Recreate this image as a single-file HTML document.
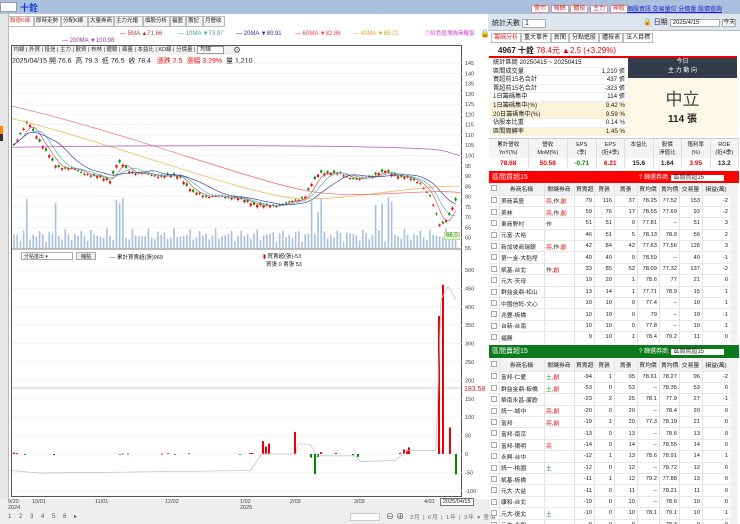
<!DOCTYPE html><html><head><meta charset="utf-8"><style>
*{box-sizing:border-box;margin:0;padding:0}
body{width:740px;height:524px;overflow:hidden;background:#fff;font-family:"Liberation Sans","Noto Sans CJK TC",sans-serif;font-size:7px;color:#222;position:relative}
.a{position:absolute}
.tab{position:absolute;top:16px;height:11px;border:1px solid #bbb;background:#f4f4f4;font-size:5.5px;line-height:9px;padding:0 1px;overflow:hidden;white-space:nowrap}
table{border-collapse:collapse;font-size:5.8px;table-layout:fixed}
td{border-right:1px solid #e3e3e3;border-bottom:1px solid #e8e8e8;height:11.4px;padding:0 1.5px;white-space:nowrap;overflow:hidden}
td.n{text-align:right}
.pk td{background:#fde6e8}.gr td{background:#e9f3e6}
.cb{display:inline-block;width:6px;height:6px;border:1px solid #aaa;background:#fff;vertical-align:middle;font-size:5px;line-height:5px}
.r{color:#e00}.g{color:#080}
.hd td{background:#f2f2f2;text-align:center;height:12px}
</style></head><body>
<div class="a" style="left:0;top:0;width:740px;height:14px;background:#a9c0de"></div>
<div class="a" style="left:0;top:2px;width:17px;height:10px;background:#fff;border:1px solid #999"></div>
<div class="a" style="left:20px;top:1px;font-size:9px;color:#1a3ccc;font-weight:bold">十銓</div>
<div class="a" style="left:0;top:14px;width:9px;height:510px;background:#e6e6e6;border-right:1px solid #bbb"></div>
<div class="a" style="left:0;top:126px;width:3px;height:8px;background:#f80"></div>
<div class="a" style="left:0;top:134px;width:3px;height:7px;background:#333"></div>
<div class="tab" style="left:8px;width:26px;color:#d33;background:#fff">聯德K線</div>
<div class="tab" style="left:34px;width:27px">即時走勢</div>
<div class="tab" style="left:61px;width:27px">分配K線</div>
<div class="tab" style="left:88px;width:26px">大量券商</div>
<div class="tab" style="left:114px;width:29px">主力光譜</div>
<div class="tab" style="left:143px;width:27px">個股分析</div>
<div class="tab" style="left:170px;width:16px">福盈</div>
<div class="tab" style="left:186px;width:17px">籌記</div>
<div class="tab" style="left:203px;width:22px">月營收</div>
<div class="a" style="left:120px;top:31px;font-size:6px;color:#c33">— 5MA ▲71.66</div>
<div class="a" style="left:178px;top:31px;font-size:6px;color:#3a9">— 10MA ▼73.97</div>
<div class="a" style="left:236px;top:31px;font-size:6px;color:#33a">— 20MA ▼80.91</div>
<div class="a" style="left:295px;top:31px;font-size:6px;color:#e44">— 60MA ▼82.86</div>
<div class="a" style="left:353px;top:31px;font-size:6px;color:#e9a020">— 40MA ▼85.21</div>
<div class="a" style="left:62px;top:38px;font-size:6px;color:#a3a">— 200MA ▼100.98</div>
<div class="a" style="left:425px;top:29px;font-size:5.5px;color:#c3c">◎紅色區塊為無權取</div>
<div class="a" style="left:480px;top:29px;font-size:8px">🔒</div>
<div class="a" style="left:11px;top:45px;width:451px;height:452px;border:1px solid #555"></div>
<div class="a" style="left:12px;top:46px;width:224px;height:9px;font-size:5.5px;line-height:9px;color:#333;background:#f2f2f2">&nbsp;均線 | 外資 | 投信 | 主力 | 散資 | 布林 | 體驗 | 庫量 | 本益比 | KD線 | 分價量 | <span style="border:1px solid #999;background:#fff;padding:0 12px 0 2px">均線</span></div>
<div class="a" style="left:233px;top:45px;font-size:9px;color:#555">⚙</div>
<div class="a" style="left:12px;top:56px;font-size:7px">2025/04/15 開 76.6 &nbsp;高 79.3 &nbsp;低 76.5 &nbsp;收 78.4 &nbsp; <span class="r">漲跌 2.5 &nbsp;漲幅 3.29%</span> &nbsp;量 1,210</div>
<div class="a" style="left:21px;top:252px;width:52px;height:8px;border:1px solid #aaa;font-size:5px;padding-left:2px">分點進出 ▾</div>
<div class="a" style="left:76px;top:252px;width:20px;height:8px;border:1px solid #aaa;background:#eee;font-size:5px;text-align:center">縮點</div>
<div class="a" style="left:110px;top:253px;font-size:5.5px">— 累計買賣超(張)969</div>
<div class="a" style="left:263px;top:252px;font-size:5.5px"><span class="r">▮</span> 買賣超(張)-53<br>&nbsp;&nbsp;買張 0 賣張 53</div>
<svg class="a" style="left:0;top:0" width="490" height="524" id="ch">
<g id="grid" stroke="#eee" stroke-width="0.6"></g>
<g id="g"></g>
</svg>
<div class="a" style="left:444px;top:232px;font-size:6px;color:#080;background:#eef8dd;border:1px solid #bd8;padding:0 1px">66.0</div>
<div class="a" style="left:0;top:499px;width:490px;height:25px;background:#eee"></div>
<div class="a" style="left:8px;top:499px;font-size:5.5px;color:#444">9/20<br>2024</div>
<div class="a" style="left:32px;top:499px;font-size:5.5px;color:#444">10/01</div>
<div class="a" style="left:95px;top:499px;font-size:5.5px;color:#444">11/01</div>
<div class="a" style="left:165px;top:499px;font-size:5.5px;color:#444">12/02</div>
<div class="a" style="left:240px;top:499px;font-size:5.5px;color:#444">1/02<br>2025</div>
<div class="a" style="left:290px;top:499px;font-size:5.5px;color:#444">2/03</div>
<div class="a" style="left:354px;top:499px;font-size:5.5px;color:#444">3/03</div>
<div class="a" style="left:424px;top:499px;font-size:5.5px;color:#444">4/01</div>
<div class="a" style="left:440px;top:498px;font-size:5.5px;border:1px solid #777;background:#fff;padding:0 2px">2025/04/15</div>
<div class="a" style="left:8px;top:513px;font-size:6px;color:#555;letter-spacing:3px">1 2 3 4 5 6 ▸</div>
<div class="a" style="left:350px;top:513px;width:30px;height:8px;background:#fff;border:1px solid #ccc"></div>
<div class="a" style="left:386px;top:511px;font-size:8px;color:#444">⊖ ⊕</div>
<div class="a" style="left:410px;top:513px;font-size:5.5px;color:#666;letter-spacing:1px">3月 | 6月 | 1年 | 3年 ▾ 查價</div>

<div class="a" style="left:488px;top:0;width:252px;height:14px;background:#a9c0de"></div>
<div class="a" style="left:531px;top:3px;font-size:6px;color:#c33">
<span style="background:#fff;border:1px solid #c99;padding:0 2px">警示</span> <span style="background:#fff;border:1px solid #c99;padding:0 2px">報酬</span> <span style="background:#fff;border:1px solid #c99;padding:0 2px">體檢</span> <span style="background:#fff;border:1px solid #c99;padding:0 2px">主力</span> <span style="background:#fff;border:1px solid #c99;padding:0 2px">神股</span></div>
<div class="a" style="left:627px;top:4px;font-size:6px;color:#22c;text-decoration:underline">個股資訊 交易量位 分價量 股價查詢</div>
<div class="a" style="left:488px;top:14px;width:252px;height:17px;background:#dde5ef;border-bottom:1px solid #bbb"></div>
<div class="a" style="left:492px;top:18px;font-size:7px">統計天數 <span style="border:1px solid #aaa;background:#fff;padding:0 16px 0 2px">1</span></div>
<div class="a" style="left:643px;top:17px;font-size:7px">🔒 日期 <span style="border:1px solid #aaa;background:#fff;padding:0 20px 0 2px;font-size:6px">2025/4/15</span> <span style="border:1px solid #aaa;background:#fff;font-size:6px">今天</span></div>
<div class="a" style="left:491px;top:32px;font-size:6px"><span style="border:1px solid #bbb;padding:1px 2px;color:#d33">籌碼分析</span><span style="border:1px solid #bbb;padding:1px 2px">重大事件</span><span style="border:1px solid #bbb;padding:1px 2px">新聞</span><span style="border:1px solid #bbb;padding:1px 2px">分點進股</span><span style="border:1px solid #bbb;padding:1px 2px">體檢表</span><span style="border:1px solid #bbb;padding:1px 2px">法人目標</span></div>
<div class="a" style="left:489px;top:44px;width:248px;height:14px;border-bottom:2px solid #e00"></div>
<div class="a" style="left:498px;top:45px;font-size:8px;font-weight:bold">4967 十銓 <span style="color:#e00;font-weight:normal">78.4元 ▲2.5 (+3.29%)</span></div>
<div class="a" style="left:490px;top:59px;width:138px;height:78px;overflow:hidden;font-size:6.2px;line-height:7.6px" id="st"></div>
<div class="a" style="left:628px;top:58px;width:109px;height:20px;background:#333c4a;color:#fff;font-size:6px;text-align:center;line-height:9px">今日<br>主 力 動 向</div>
<div class="a" style="left:628px;top:78px;width:109px;height:58px;background:#fbf8e6;text-align:center"><div style="font-size:17px;color:#444;margin-top:7px">中立</div><div style="font-size:10px;font-weight:bold">114 張</div></div>
<div class="a" style="left:489px;top:138px;width:250px;height:32px;background:#fff;border-top:1px solid #ccc" id="met"></div>
<div class="a" style="left:489px;top:171px;width:250px;height:12px;background:#f00;color:#fff;font-size:7px;padding:1px 3px">區間買超15<span style="position:absolute;left:150px;font-size:6px">? 篩選券商: <span style="background:#fff;color:#333;padding:0 20px 0 2px">區間買超15</span></span></div>
<div class="a" style="left:489px;top:183px;width:241px;height:160px;overflow:hidden"><table id="t1" style="width:241px"></table></div>
<div class="a" style="left:730px;top:183px;width:8px;height:160px;background:#f2f2f2"></div>
<div class="a" style="left:489px;top:345px;width:250px;height:13px;background:#0a7a1a;color:#fff;font-size:7px;padding:1px 3px">區間賣超15<span style="position:absolute;left:150px;font-size:6px">? 篩選券商: <span style="background:#fff;color:#333;padding:0 20px 0 2px">區間賣超15</span></span></div>
<div class="a" style="left:489px;top:359px;width:241px;height:165px;overflow:hidden"><table id="t2" style="width:241px"></table></div>
<div class="a" style="left:730px;top:359px;width:8px;height:165px;background:#f2f2f2"></div>
<script>
var ns="http://www.w3.org/2000/svg",g=document.getElementById('g'),gr=document.getElementById('grid');
function el(t,a,p){var e=document.createElementNS(ns,t);for(var k in a)e.setAttribute(k,a[k]);(p||g).appendChild(e);return e}
function yp(p){return 63+(145-p)*2.055}function yl(v){return 454-v*0.368}
for(var p=55;p<=145;p+=5){el('line',{x1:12,x2:462,y1:yp(p),y2:yp(p)},gr);var t=el('text',{x:465,y:yp(p)+2,'font-size':5.5,fill:'#444'});t.textContent=p}
[-100,-50,0,50,100,150,200,250,300,350,400,450,500].forEach(function(v){el('line',{x1:12,x2:462,y1:yl(v),y2:yl(v)},gr);var t=el('text',{x:465,y:yl(v)+2,'font-size':5.5,fill:'#444'});t.textContent=v});
el('line',{x1:12,x2:462,y1:249,y2:249,stroke:'#555','stroke-width':0.8});
el('line',{x1:12,x2:462,y1:388,y2:388,stroke:'#99c','stroke-width':0.6});
var t=el('text',{x:464,y:391,'font-size':7,fill:'#c22'});t.textContent='183.58';
var k=[[13,105],[28,116],[40,107],[55,95],[75,93],[100,89],[110,88],[118,97],[130,92],[160,90],[180,90],[192,82],[210,80],[230,80],[265,75],[290,77],[305,80],[312,86],[320,92],[340,91],[360,88],[375,91],[385,92],[400,90],[420,87],[430,80],[440,66],[448,70],[456,78]];
function px(x){for(var i=1;i<k.length;i++)if(x<=k[i][0]){var a=k[i-1],b=k[i];return a[1]+(b[1]-a[1])*(x-a[0])/(b[0]-a[0])}return 78}
var cl=[],xs=[];
for(var x=14;x<=456;x+=3.2){var c=px(x)+Math.sin(x*1.7)*0.5;var o=c+Math.sin(x*2.9)*1.1;xs.push(x);cl.push(c);
var up=c>o,col=up?'#e00':'#080';el('line',{x1:x,x2:x,y1:yp(Math.max(o,c)+0.6),y2:yp(Math.min(o,c)-0.6),stroke:col,'stroke-width':0.6});
el('rect',{x:x-1.1,y:yp(Math.max(o,c)),width:2.2,height:Math.max(1,Math.abs(o-c)*2.055),fill:col});
var r=(Math.sin(x*0.37)*Math.sin(x*1.13)+1)*0.5,v=6+r*14;if([28,55,118,122,312,317,322,376,383,390].some(function(q){return Math.abs(q-x)<1.7}))v=35+r*20;
el('rect',{x:x-0.8,y:248-v,width:1.6,height:v,fill:'#a8c2de'});}
function ma(n,col){var d='';for(var i=0;i<cl.length;i++){var a=0,m=0;for(var j=Math.max(0,i-n);j<=i;j++){a+=cl[j];m++}d+=(i?'L':'M')+xs[i]+' '+yp(a/m)}el('path',{d:d,fill:'none',stroke:col,'stroke-width':0.7})}
ma(3,'#d55');ma(6,'#4bb');ma(12,'#44a');
el('path',{d:'M12 '+yp(118)+' C120 '+yp(105)+' 250 '+yp(80)+' 300 '+yp(79)+' S420 '+yp(86)+' 460 '+yp(85),fill:'none',stroke:'#f0b050','stroke-width':0.7});
el('path',{d:'M12 '+yp(124)+' C120 '+yp(112)+' 250 '+yp(88)+' 305 '+yp(83)+' S420 '+yp(84)+' 460 '+yp(82),fill:'none',stroke:'#e66','stroke-width':0.7});
el('path',{d:'M12 '+yp(104)+' C150 '+yp(105)+' 300 '+yp(105)+' 380 '+yp(104)+' S440 '+yp(102)+' 460 '+yp(100),fill:'none',stroke:'#b5b','stroke-width':0.7});
var lb=[[14,4],[17,2],[25,-2],[54,-3],[120,-2],[123,1],[128,1],[162,1],[168,2],[175,-2],[189,2],[240,-1],[250,2],[252,3],[263,35],[266,20],[269,28],[295,60],[311,-10],[315,-55],[318,-8],[321,5],[336,3],[353,-3],[358,-8],[400,3],[404,12],[407,10],[409,18],[439,375],[443,460],[450,72],[456,-55]];
lb.forEach(function(b){var y=yl(Math.max(0,b[1])),h=Math.abs(b[1])*0.368;el('rect',{x:b[0]-1,y:y,width:2,height:Math.max(h,0.8),fill:b[1]>0?'#e00':'#080'})});
el('path',{d:'M12 '+yl(-45)+' L40 '+yl(-52)+' L250 '+yl(-45)+' L262 '+yl(0)+' L296 '+yl(0)+' L298 '+yl(28)+' L310 '+yl(26)+' L318 '+yl(-5)+' L355 '+yl(-5)+' L360 '+yl(-20)+' L395 '+yl(-18)+' L408 '+yl(10)+' L436 '+yl(10)+' L441 '+yl(420)+' L448 '+yl(455)+' L456 '+yl(420),fill:'none',stroke:'#bbb','stroke-width':0.7});
var st=[['統計區間 20250415 ~ 20250415','',0],['區間成交量','1,210 張',0],['買超前15名合計','437 張',0],['賣超前15名合計','-323 張',0],['1日籌碼集中','114 張',0],['1日籌碼集中(%)','9.42 %',1],['20日籌碼集中(%)','9.59 %',1],['佔股本比重','0.14 %',0],['區間周轉率','1.45 %',1]],h='';
st.forEach(function(r){h+='<div style="display:flex;justify-content:space-between;padding:0 3px;border-bottom:1px solid #eee;height:8.6px;background:'+(r[2]?'#fbf3d6':'#fff')+'"><span>'+r[0]+'</span><span>'+r[1]+'</span></div>'});document.getElementById('st').innerHTML=h;
var mh=[['累計營收<br>YoY(%)','78.68','r'],['營收<br>MoM(%)','50.58','r'],['EPS<br>(季)','-0.71','g'],['EPS<br>(近4季)','6.21','r'],['本益比','15.6',''],['股價<br>淨值比','1.64',''],['殖利率<br>(%)','3.95','r'],['ROE<br>(近4季)','13.2','']];h='<div style="display:flex">';
mh.forEach(function(m,i){h+='<div style="flex:'+(i<2?1.4:1)+';text-align:center;font-size:5.5px;border-right:1px solid #ddd"><div style="height:19px;line-height:8px;padding-top:2px;background:#f4f4f4">'+m[0]+'</div><div style="font-weight:bold;font-size:6.5px;padding-top:2px" class="'+m[2]+'">'+m[1]+'</div></div>'});document.getElementById('met').innerHTML=h+'</div>';
var W=[10,45,30,20,20,23,22,20,23,28];
var hd='<colgroup>'+W.map(function(w){return '<col style="width:'+w+'px">'}).join('')+'</colgroup><tr class="hd"><td><span class="cb"></span></td><td>券商名稱</td><td>關鍵券商</td><td>買賣超</td><td>買張</td><td>賣張</td><td>買均價</td><td>賣均價</td><td>交易量</td><td>損益(萬)</td></tr>';
function tb(id,rows){var h=hd;rows.forEach(function(r){var tg=r[1].replace(/創/g,'<span class=r>創</span>').replace(/亮/g,'<span class=r>亮</span>').replace(/土/g,'<span class=g>土</span>');h+='<tr class="'+(r[10]||'')+'"><td><span class="cb">'+(r[11]?'✓':'')+'</span></td><td>'+r[0]+'</td><td>'+tg+'</td>';for(var i=2;i<9;i++)h+='<td class="n">'+r[i]+'</td>';h+='<td class="n">'+r[9]+'</td></tr>'});document.getElementById(id).innerHTML=h}
tb('t1',[['美商高盛','亮,作,創',79,116,37,78.25,77.52,153,-2,'pk'],['美林','亮,作,創',59,76,17,78.55,77.69,93,-2,'pk'],['東商野村','作',51,51,0,77.81,'--',51,3],['元富-大裕','',46,51,5,78.13,78.9,56,2],['新加坡商瑞銀','亮,作,創',42,84,42,77.63,77.56,126,3,'pk'],['第一金-大稻埕','',40,40,0,78.59,'--',40,-1],['凱基-台北','作,創',33,85,52,78.09,77.32,137,-2,'pk'],['元大-天母','',19,20,1,78.6,77,21,0],['群益金鼎-松山','',13,14,1,77.71,78.9,15,1],['中國信託-文心','',10,10,0,77.4,'--',10,1],['兆豐-板橋','',10,10,0,79,'--',10,-1],['台新-台南','',10,10,0,77.8,'--',10,1],['福勝','',9,10,1,78.4,79.2,11,0],['元大-永春','',8,8,0,78.1,'--',8,0]]);
tb('t2',[['富邦-仁愛','土,創',-94,1,95,78.61,78.27,96,-2,'pk'],['群益金鼎-板橋','土,創',-53,0,53,'--',78.35,53,0,'pk',1],['華南永昌-蘆歡','',-23,2,25,78.1,77.9,27,-1],['統一-城中','亮,創',-20,0,20,'--',78.4,20,0,'gr'],['富邦','亮,創',-19,1,20,77.3,78.19,21,0,'gr'],['富邦-南京','',-13,0,13,'--',78.6,13,0],['富邦-陽明','亮',-14,0,14,'--',78.55,14,0],['永興-台中','',-12,1,13,78.6,78.91,14,1],['統一-桃園','土',-12,0,12,'--',78.72,12,0],['凱基-板橋','',-11,1,12,79.2,77.88,13,0],['元大-大益','',-11,0,11,'--',78.21,11,0],['康和-台北','',-10,0,10,'--',78.6,10,0],['元大-復北','土',-10,0,10,78.1,79.1,10,1],['元大-永和','',-9,0,9,'--',78.3,9,0]]);
</script>
</body></html>
